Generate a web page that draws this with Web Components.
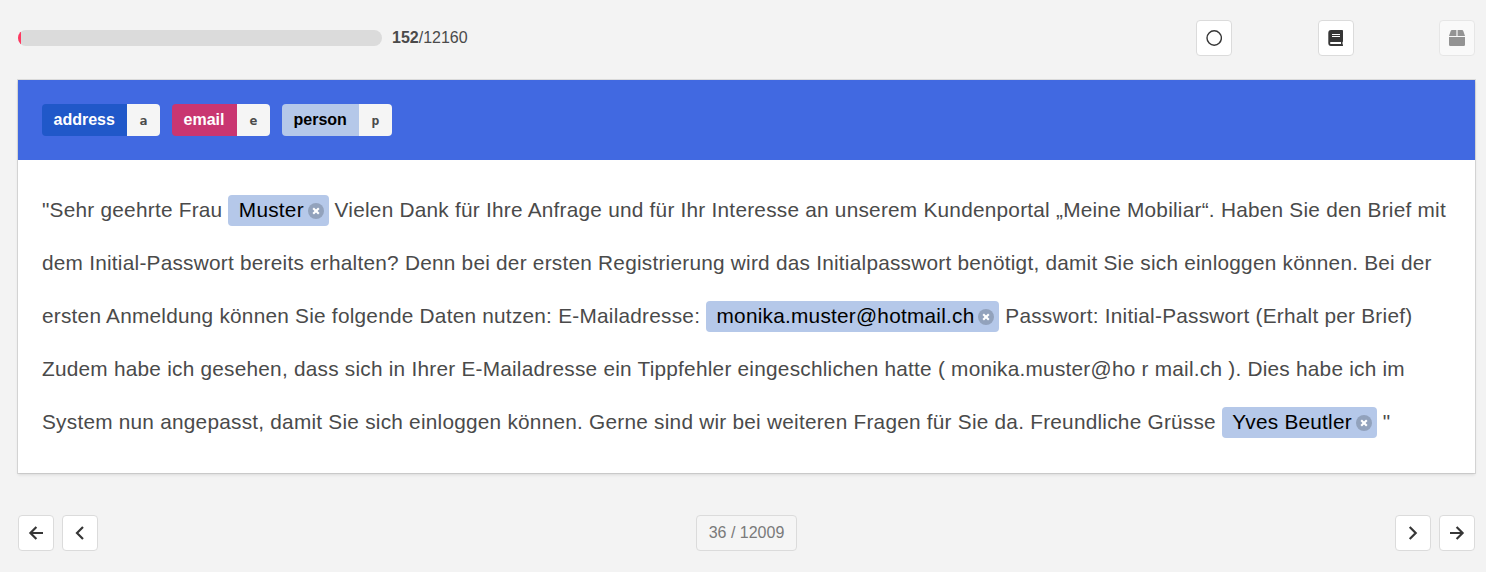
<!DOCTYPE html>
<html lang="de">
<head>
<meta charset="utf-8">
<title>Annotation</title>
<style>
html,body{margin:0;background:#f3f3f3}
body{font-family:"Liberation Sans",Arial,sans-serif;font-size:16px;line-height:24px;color:#4a4a4a}
</style>
</head>
<body>
<annotation-page></annotation-page>
<script>
const define = (name, html, setup) => customElements.define(name, class extends HTMLElement {
  constructor() {
    super();
    this.attachShadow({mode: 'open'}).innerHTML = html;
  }
  connectedCallback() { if (setup) setup(this, this.shadowRoot); }
});

const icons = {
  circle: '<circle cx="8.2" cy="8" r="7.2" fill="none" stroke="currentColor" stroke-width="1.4"/>',
  book: '<path fill-rule="evenodd" d="M3 0H14.2Q15 0 15 .8V11.3Q15 11.8 14.6 12Q14.3 13.1 14.6 14.2Q15 14.4 15 14.8V15.4Q15 16 14.3 16H3Q.3 16 .3 13.1V3Q.3 0 3 0ZM4 4V5H12V4ZM4 6V7H12V6ZM3 12Q2 12 2 13T3 14H13V12Z" fill="currentColor"/>',
  box: '<path d="M7.4 0V6H0L1.7 1Q2 0 3 0ZM8.6 0H13Q14 0 14.3 1L16 6H8.6ZM0 7H16V14.8Q16 16 14.8 16H1.2Q0 16 0 14.8Z" fill="currentColor"/>',
  prev: '<path d="M11 2L5 8L11 14" fill="none" stroke="currentColor" stroke-width="2.2"/>',
  next: '<path d="M4.7 2L10.7 8L4.7 14" fill="none" stroke="currentColor" stroke-width="2.2"/>',
  first: '<path d="M8.4 2L2.4 8L8.4 14M2.4 8H15" fill="none" stroke="currentColor" stroke-width="2.2"/>',
  last: '<path d="M7.6 2L13.6 8L7.6 14M13.6 8H1" fill="none" stroke="currentColor" stroke-width="2.2"/>'
};

define('icon-button', `<style>
:host{display:block;flex:none}
button{display:flex;align-items:center;justify-content:center;box-sizing:border-box;width:36px;height:36px;padding:0;margin:0;border:1px solid #dbdbdb;border-radius:4px;background:#fff;color:#363636}
:host([disabled]) button{opacity:.5}
svg{display:block;width:16px;height:16px}
</style><button type="button"><svg viewBox="0 0 16 16"></svg></button>`, (el, root) => {
  root.querySelector('svg').innerHTML = icons[el.getAttribute('icon')];
});

define('progress-meter', `<style>
:host{display:flex;align-items:center;gap:10px}
.track{width:364px;height:16px;border-radius:8px;overflow:hidden;background:#dbdbdb}
.bar{width:3px;height:100%;background:#ff3860}
</style><div class="track"><div class="bar"></div></div><div class="label"><slot></slot></div>`);

define('label-tag', `<style>
:host{display:flex;height:32px;border-radius:4px;overflow:hidden}
.name{display:flex;align-items:center;box-sizing:border-box;width:var(--tag-w);padding:0 11.5px 1px;background:var(--tag-bg);color:var(--tag-fg,#fff);font-weight:700}
kbd{display:flex;align-items:center;justify-content:center;width:33px;background:#f5f5f5;color:#4a4a4a;font:700 13px "DejaVu Sans Mono",monospace;padding-top:1px;box-sizing:border-box}
</style><span class="name"><slot></slot></span><kbd></kbd>`, (el, root) => {
  root.querySelector('kbd').textContent = el.getAttribute('key');
});

define('entity-mark', `<style>
:host{display:inline-flex;box-sizing:border-box;align-items:center;height:31px;line-height:29px;padding:0 5px 0 10.4px;border-radius:4px;background:#b5c8e9;color:#000;vertical-align:baseline}
svg{flex:none;width:16px;height:16px;margin:1px 0 0 3.8px}
.text{height:31px}
</style><span class="text"><slot></slot></span><svg viewBox="0 0 16 16"><circle cx="8" cy="8" r="8" fill="#92a2bc"/><path d="M5.2 5.2L10.8 10.8M10.8 5.2L5.2 10.8" stroke="#fff" stroke-width="2.1"/></svg>`);

define('annotation-card', `<style>
:host{display:block;background:#fff;box-shadow:0 2px 3px rgba(10,10,10,.1),0 0 0 1px rgba(10,10,10,.1)}
header{display:flex;gap:12px;padding:24px;background:#4169e1}
</style><header><slot name="labels"></slot></header><slot></slot>`);

define('annotated-text', `<style>
:host{display:block;padding:23px 24px 25px;font-size:20.8px;letter-spacing:.236px;line-height:53px}
.line{white-space:nowrap;height:53px}
</style>
<div class="line">"Sehr geehrte Frau <entity-mark>Muster</entity-mark> Vielen Dank für Ihre Anfrage und für Ihr Interesse an unserem Kundenportal „Meine Mobiliar“. Haben Sie den Brief mit</div>
<div class="line">dem Initial-Passwort bereits erhalten? Denn bei der ersten Registrierung wird das Initialpasswort benötigt, damit Sie sich einloggen können. Bei der</div>
<div class="line">ersten Anmeldung können Sie folgende Daten nutzen: E-Mailadresse: <entity-mark>monika.muster@hotmail.ch</entity-mark> Passwort: Initial-Passwort (Erhalt per Brief)</div>
<div class="line">Zudem habe ich gesehen, dass sich in Ihrer E-Mailadresse ein Tippfehler eingeschlichen hatte ( monika.muster@ho r mail.ch ). Dies habe ich im</div>
<div class="line">System nun angepasst, damit Sie sich einloggen können. Gerne sind wir bei weiteren Fragen für Sie da. Freundliche Grüsse <entity-mark>Yves Beutler</entity-mark> "</div>`);

define('page-indicator', `<style>
:host{display:flex;align-items:center;justify-content:center;box-sizing:border-box;width:101px;height:36px;padding-bottom:1px;border:1px solid #dbdbdb;border-radius:4px;background:#f5f5f5;color:#7a7a7a}
</style><slot></slot>`);

define('annotation-page', `<style>
:host{display:block;box-sizing:border-box;height:572px;padding:20px 11px 0 18px}
.top{display:flex;justify-content:space-between;align-items:center;margin-bottom:24px}
.tools{display:flex;justify-content:space-between;width:279px}
.nav{display:grid;grid-template-columns:1fr auto 1fr;margin-top:42px}
.group{display:flex;gap:8px}
.group.end{justify-content:flex-end}
</style>
<div class="top">
  <progress-meter><strong>152</strong>/12160</progress-meter>
  <div class="tools"><icon-button icon="circle"></icon-button><icon-button icon="book"></icon-button><icon-button icon="box" disabled></icon-button></div>
</div>
<annotation-card>
  <label-tag slot="labels" key="a" style="--tag-bg:#2058c9;--tag-w:85px">address</label-tag>
  <label-tag slot="labels" key="e" style="--tag-bg:#c93671;--tag-w:65px">email</label-tag>
  <label-tag slot="labels" key="p" style="--tag-bg:#b5c8e9;--tag-fg:#000;--tag-w:77px">person</label-tag>
  <annotated-text></annotated-text>
</annotation-card>
<div class="nav">
  <div class="group"><icon-button icon="first"></icon-button><icon-button icon="prev"></icon-button></div>
  <page-indicator>36 / 12009</page-indicator>
  <div class="group end"><icon-button icon="next"></icon-button><icon-button icon="last"></icon-button></div>
</div>`);
</script>
</body>
</html>
